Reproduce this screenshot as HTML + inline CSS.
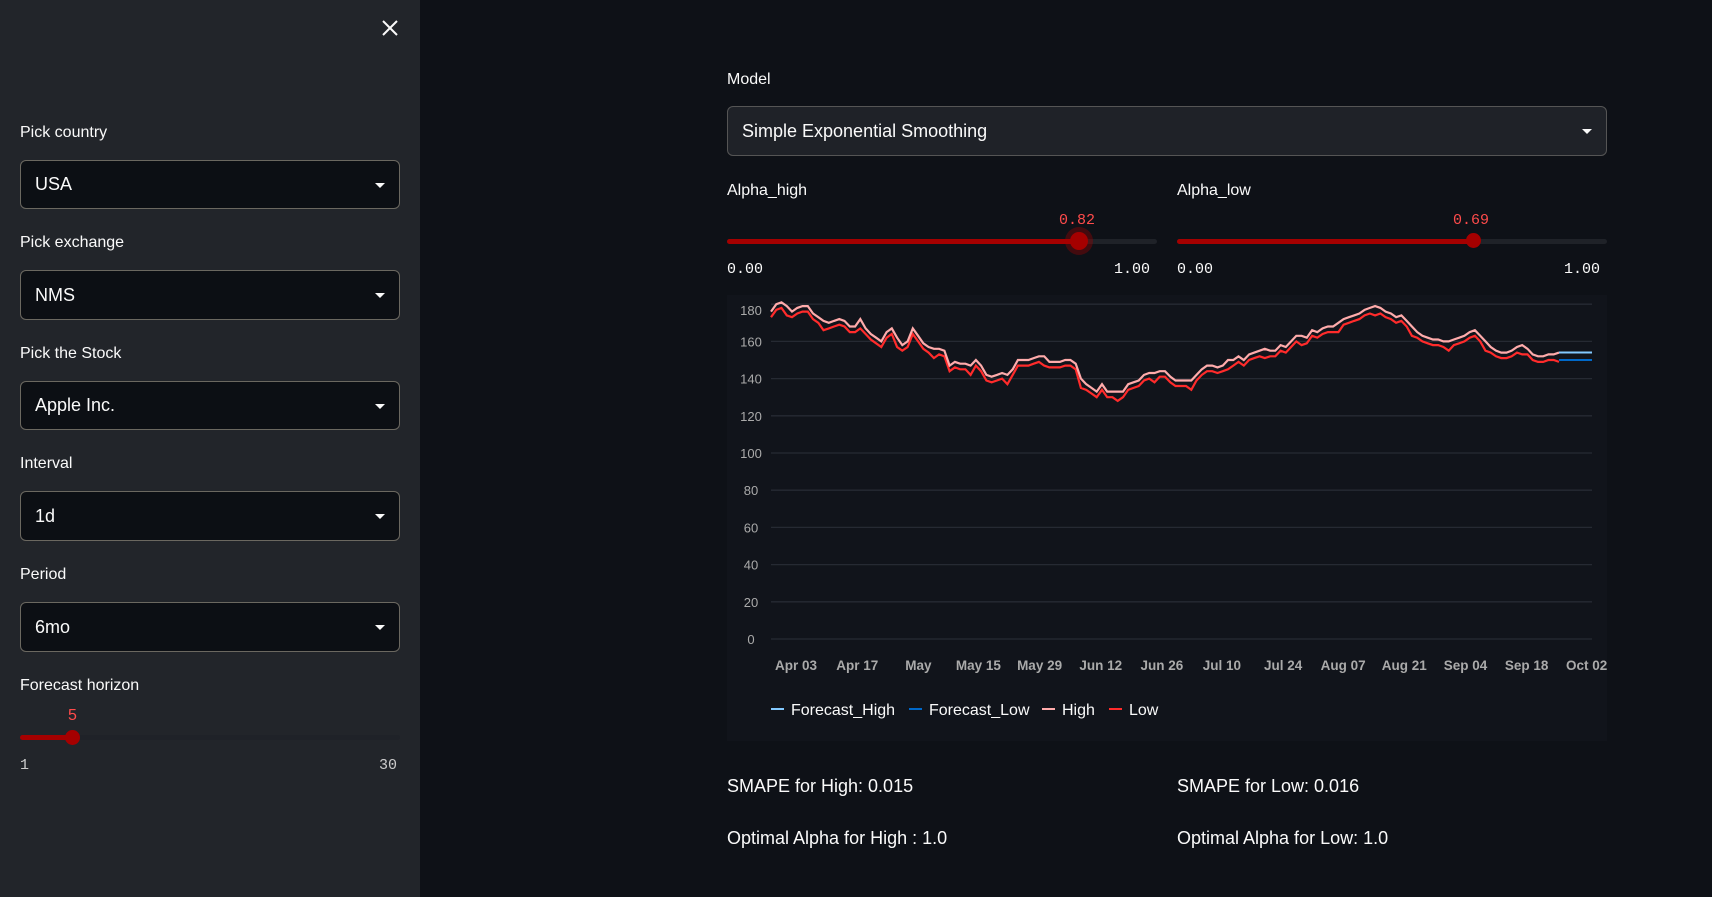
<!DOCTYPE html>
<html><head><meta charset="utf-8"><style>
*{box-sizing:border-box;margin:0;padding:0}
body{width:1712px;height:897px;background:#0e1117;font-family:"Liberation Sans",sans-serif;color:#fafafa;position:relative;overflow:hidden}
.side{position:absolute;left:0;top:0;width:420px;height:897px;background:#22252a}
.abs{position:absolute}
.lbl{position:absolute;font-size:16px;color:#fafafa}
.sel{position:absolute;background:#0c0f14;border:1px solid #6b6860;border-radius:6px;font-size:18px;padding-left:14px;display:flex;align-items:center}
.sel::after{content:"";position:absolute;right:14px;top:50%;margin-top:-2px;border-left:5px solid transparent;border-right:5px solid transparent;border-top:5px solid #fafafa}
.mono{font-family:"Liberation Mono",monospace;position:absolute;font-size:15px}
.track{position:absolute;height:5px;border-radius:3px;background:#1f2228}
.fill{position:absolute;height:5px;border-radius:3px;background:#a50000}
.knob{position:absolute;width:18px;height:18px;border-radius:50%;background:#a50000;box-shadow:0 0 0 5px rgba(165,0,0,.35)}
.txt{position:absolute;font-size:18px}
</style></head><body>
<div class="side">
<svg class="abs" style="left:382px;top:20px" width="16" height="16"><path d="M1 1L15 15M15 1L1 15" stroke="#fafafa" stroke-width="2"/></svg>
<div class="lbl" style="left:20px;top:124px">Pick country</div>
<div class="sel" style="left:20px;top:160px;width:380px;height:49px">USA</div>
<div class="lbl" style="left:20px;top:234px">Pick exchange</div>
<div class="sel" style="left:20px;top:270px;width:380px;height:50px">NMS</div>
<div class="lbl" style="left:20px;top:345px">Pick the Stock</div>
<div class="sel" style="left:20px;top:381px;width:380px;height:49px">Apple Inc.</div>
<div class="lbl" style="left:20px;top:455px">Interval</div>
<div class="sel" style="left:20px;top:491px;width:380px;height:50px">1d</div>
<div class="lbl" style="left:20px;top:566px">Period</div>
<div class="sel" style="left:20px;top:602px;width:380px;height:50px">6mo</div>
<div class="lbl" style="left:20px;top:677px">Forecast horizon</div>
<div class="abs" style="left:68px;top:707px;font-size:16px;color:#ff4b4b">5</div>
<div class="track" style="left:20px;top:735px;width:380px"></div>
<div class="fill" style="left:20px;top:735px;width:52px"></div>
<div class="knob" style="box-shadow:none;width:15px;height:15px;top:730px;left:65px"></div>
<div class="mono" style="left:20px;top:757px;color:#ccc">1</div>
<div class="mono" style="left:379px;top:757px;color:#ccc">30</div>
</div>

<div class="lbl" style="left:727px;top:71px">Model</div>
<div class="sel" style="left:727px;top:106px;width:880px;height:50px;background:#1f2228;border-color:#555">Simple Exponential Smoothing</div>
<div class="lbl" style="left:727px;top:182px">Alpha_high</div>
<div class="lbl" style="left:1177px;top:182px">Alpha_low</div>
<div class="mono" style="left:1059px;top:212px;color:#ff4b4b">0.82</div>
<div class="mono" style="left:1453px;top:212px;color:#ff4b4b">0.69</div>
<div class="track" style="left:727px;top:239px;width:430px"></div>
<div class="fill" style="left:727px;top:239px;width:352px"></div>
<div class="knob" style="left:1070px;top:232px"></div>
<div class="track" style="left:1177px;top:239px;width:430px"></div>
<div class="fill" style="left:1177px;top:239px;width:297px"></div>
<div class="knob" style="left:1466px;top:233px;box-shadow:none;width:15px;height:15px"></div>
<div class="mono" style="left:727px;top:261px">0.00</div>
<div class="mono" style="left:1114px;top:261px">1.00</div>
<div class="mono" style="left:1177px;top:261px">0.00</div>
<div class="mono" style="left:1564px;top:261px">1.00</div>

<svg class="abs" style="left:727px;top:295px" width="880" height="446" id="ch">
<rect width="880" height="446" fill="#11141b"/>
</svg>

<div class="txt" style="left:727px;top:776px">SMAPE for High: 0.015</div>
<div class="txt" style="left:1177px;top:776px">SMAPE for Low: 0.016</div>
<div class="txt" style="left:727px;top:828px">Optimal Alpha for High : 1.0</div>
<div class="txt" style="left:1177px;top:828px">Optimal Alpha for Low: 1.0</div>

<script>
var s=document.getElementById('ch'),h='';
function Y(v){return 344-v*1.86;}
for(var v=0;v<=180;v+=20){var y=Y(v);h+='<line x1="44" x2="865" y1="'+y+'" y2="'+y+'" stroke="#262a33" stroke-width="1.3"/>';
h+='<text x="24" y="'+(y+(v==180?11:5))+'" fill="#aaa" font-size="13" text-anchor="middle" font-family="Liberation Sans">'+v+'</text>';}
var L=['Apr 03','Apr 17','May','May 15','May 29','Jun 12','Jun 26','Jul 10','Jul 24','Aug 07','Aug 21','Sep 04','Sep 18','Oct 02'],xs=[729,785,841,896,952,1008,1064,1119,1175,1230,1286,1342,1398,1453];
for(var i=0;i<L.length;i++)h+='<text x="'+(xs[i]*1.092-727)+'" y="375" fill="#aaa" font-size="13.5" font-weight="bold" text-anchor="middle" font-family="Liberation Sans">'+L[i]+'</text>';
var d=[176,180,181,179,176,178,179,179,175,173,171,170,171,172,171,168,168,172,167,164,162,160,165,167,162,158,160,167,163,159,157,156,156,155,147,149,148,148,147,150,147,142,141,142,143,142,145,150,150,150,151,152,152,149,149,149,150,150,148,140,137,135,133,137,133,133,133,133,137,138,139,142,143,143,144,144,141,139,139,139,139,142,145,147,147,146,147,150,150,152,150,153,154,155,156,155,155,158,157,160,163,163,162,166,165,167,168,168,170,172,173,174,175,177,178,179,178,176,175,173,174,171,168,165,163,162,161,161,160,160,161,162,163,165,166,163,160,157,155,154,154,155,157,158,156,153,152,152,153,153,154];
var n=d.length,x0=44,x1=832,ph='',pl='';
for(var i=0;i<n;i++){var x=x0+(x1-x0)*i/(n-1);ph+=x.toFixed(1)+','+Y(d[i]).toFixed(1)+' ';var lo=d[i]-3-(i%7==3?2:0);pl+=x.toFixed(1)+','+Y(lo).toFixed(1)+' ';}
h+='<polyline points="'+pl+'" fill="none" stroke="#ff2b2b" stroke-width="2.2"/>';
h+='<polyline points="'+ph+'" fill="none" stroke="#ffabab" stroke-width="2.2"/>';
h+='<line x1="'+x1+'" x2="865" y1="'+Y(154)+'" y2="'+Y(154)+'" stroke="#83c9ff" stroke-width="2"/>';
h+='<line x1="'+x1+'" x2="865" y1="'+Y(150)+'" y2="'+Y(150)+'" stroke="#0068c9" stroke-width="2"/>';
var lg=[['Forecast_High','#83c9ff',44],['Forecast_Low','#0068c9',182],['High','#ffabab',315],['Low','#ff2b2b',382]];
for(var i=0;i<lg.length;i++){var a=lg[i];h+='<line x1="'+a[2]+'" x2="'+(a[2]+13)+'" y1="414" y2="414" stroke="'+a[1]+'" stroke-width="2"/><text x="'+(a[2]+20)+'" y="420" fill="#fafafa" font-size="16" font-family="Liberation Sans">'+a[0]+'</text>';}
s.innerHTML+=h;
</script>
</body></html>
